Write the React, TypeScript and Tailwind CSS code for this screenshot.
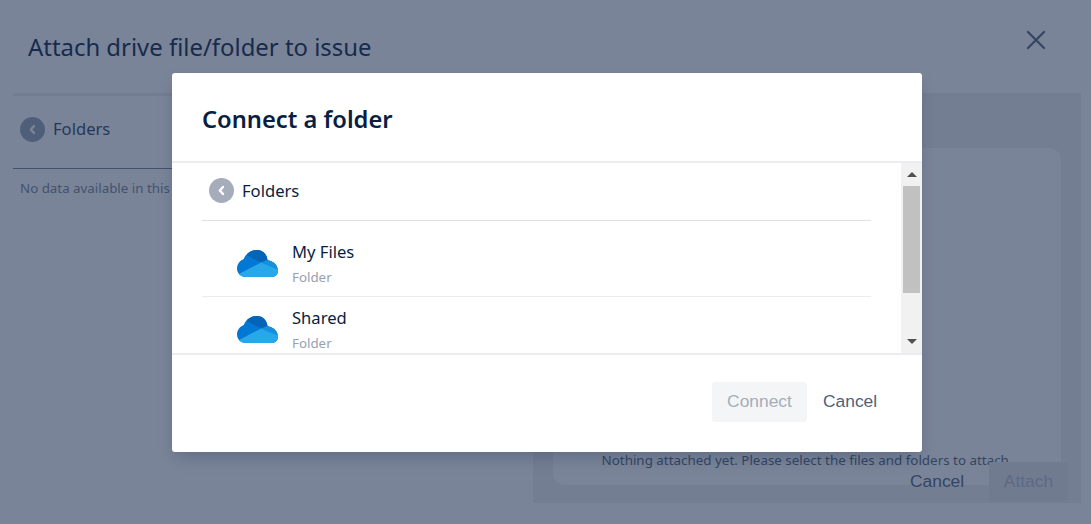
const sans = "font-['Noto_Sans','Open_Sans',sans-serif]";
const arial = "font-['Liberation_Sans',Arial,sans-serif]";

function BackIcon({ bg, dim }: { bg: string; dim?: boolean }) {
  return (
    <span className={`flex h-[25px] w-[25px] shrink-0 items-center justify-center rounded-full ${bg}`}>
      <svg width="9" height="11" viewBox="0 0 9 11" fill="none">
        <path
          d="M6 2 2.8 5.5 6 9"
          stroke={dim ? "#7a8498" : "#ffffff"}
          strokeWidth="2.4"
          strokeLinecap="round"
          strokeLinejoin="round"
        />
      </svg>
    </span>
  );
}

function CloudIcon({ id }: { id: string }) {
  return (
    <svg width="41" height="27" viewBox="0 0 41 27" className="shrink-0">
      <defs>
        <clipPath id={id}>
          <path d="M8.5 27C3.8 27 0 23.4 0 18.6 0 14.2 2.8 10.6 6.8 9 8.6 3.6 14.2 0 20 0 26 0 30 4.5 30.5 10.2 36 10.6 41 15 41 21 41 24.4 38.4 27 35 27Z" />
        </clipPath>
      </defs>
      <g clipPath={`url(#${id})`}>
        <rect width="41" height="27" fill="#0078d4" />
        <path d="M10 -1H32V10.5L24 12.5 10 5.5Z" fill="#0364b8" />
        <path d="M24 12.5 30 10 42 14V20Z" fill="#1490df" />
        <path d="M0 27 2 24 24 12.5 42 20V27Z" fill="#28a8ea" />
      </g>
    </svg>
  );
}

function FolderRow({ name, id, border }: { name: string; id: string; border?: boolean }) {
  return (
    <div className={`flex h-[66px] shrink-0 items-start ${border ? "border-b border-[#ebecf0]" : ""}`}>
      <div className="ml-[35px] mt-[19px]">
        <CloudIcon id={id} />
      </div>
      <div className="ml-[14px] flex flex-col pt-[10px]">
        <span className="text-[16.6px] leading-[22px] text-[#091e42]">{name}</span>
        <span className="mt-[5px] text-[13.33px] leading-[18px] text-[#97a0af]">Folder</span>
      </div>
    </div>
  );
}

function ScrollBar() {
  return (
    <div className="flex w-[21px] shrink-0 flex-col items-center bg-[#f1f1f1]">
      <div className="flex h-[23px] items-center justify-center">
        <div className="h-0 w-0 border-x-[5px] border-b-[5px] border-x-transparent border-b-[#505050]" />
      </div>
      <div className="h-[107px] w-[17px] bg-[#c1c1c1]" />
      <div className="flex flex-1 items-end justify-center pb-[9px]">
        <div className="h-0 w-0 border-x-[5px] border-t-[5px] border-x-transparent border-t-[#505050]" />
      </div>
    </div>
  );
}

function ConnectModal() {
  return (
    <div className="absolute left-[172px] top-[73px] flex h-[379px] w-[750px] flex-col overflow-hidden rounded-[3px] bg-white shadow-[0_8px_16px_-4px_rgba(9,30,66,0.25)]">
      <div className="flex h-[90px] shrink-0 items-center border-b-2 border-[#ebecf0] pl-[30px] pt-[4px]">
        <h2 className="text-[23.7px] font-semibold leading-[32px] text-[#091e42]">Connect a folder</h2>
      </div>
      <div className="flex h-[192px] shrink-0 overflow-hidden border-b-2 border-[#ebecf0]">
        <div className="flex-1 overflow-hidden px-[30px]">
          <div className="mb-[10px] flex h-[58px] items-center gap-[8px] border-b border-[#dfe1e6] pb-[2px] pl-[7px]">
            <BackIcon bg="bg-[#a5adba]" />
            <span className="mt-[2px] text-[16.6px] text-[#091e42]">Folders</span>
          </div>
          <FolderRow name="My Files" id="cloud-a" border />
          <FolderRow name="Shared" id="cloud-b" />
        </div>
        <ScrollBar />
      </div>
      <div className={`flex flex-1 items-start justify-end gap-[16px] pr-[46px] pt-[27px] text-[17.4px] ${arial}`}>
        <button className="h-[40px] w-[95px] rounded-[3px] bg-[#f4f5f7] pb-[2px] text-[#a5adba]">Connect</button>
        <button className="h-[40px] w-[53px] whitespace-nowrap pb-[2px] text-[#505f79]">Cancel</button>
      </div>
    </div>
  );
}

export default function App() {
  return (
    <div className={`relative h-screen w-full overflow-hidden bg-[#7a8498] ${sans}`}>
      <div className="ml-[13px] mr-[10px] flex h-[96px] items-center justify-between border-b-[3px] border-[#737d91] pl-[15px] pr-[35px]">
        <h1 className="text-[23.9px] leading-[32px] text-[#172b4d]">Attach drive file/folder to issue</h1>
        <svg width="20" height="20" viewBox="0 0 20 20" fill="none" className="mb-[14px]">
          <path d="M2 2 18 18M18 2 2 18" stroke="#344563" strokeWidth="2.2" strokeLinecap="round" />
        </svg>
      </div>
      <div className="ml-[13px] mr-[10px] flex h-[407px]">
        <div className="w-[520px] shrink-0">
          <div className="flex h-[73px] items-center gap-[8px] border-b border-[#42526e] pb-[5px] pl-[7px]">
            <BackIcon bg="bg-[#505f79]" dim />
            <span className="text-[16.6px] text-[#253858]">Folders</span>
          </div>
          <p className="pl-[7px] pt-[10px] text-[13.33px] leading-[18px] text-[#42526e]">No data available in this folder</p>
        </div>
        <div className="relative flex-1 bg-[#747e92] px-[20px] pt-[52px]">
          <div className="flex h-[337px] flex-col items-center justify-end rounded-[12px] bg-[#7a8498] pb-[16px]">
            <p className="text-[13.4px] leading-[18px] text-[#344563]">
              Nothing attached yet. Please select the files and folders to attach.
            </p>
          </div>
          <div className={`absolute bottom-[2px] right-[13px] flex items-center gap-[26px] text-[17.4px] ${arial}`}>
            <span className="w-[53px] whitespace-nowrap text-[#344563]">Cancel</span>
            <span className="flex h-[39px] w-[79px] items-center justify-center rounded-[3px] bg-[#707b90] text-[#5d6a83]">
              Attach
            </span>
          </div>
        </div>
      </div>
      <ConnectModal />
    </div>
  );
}
